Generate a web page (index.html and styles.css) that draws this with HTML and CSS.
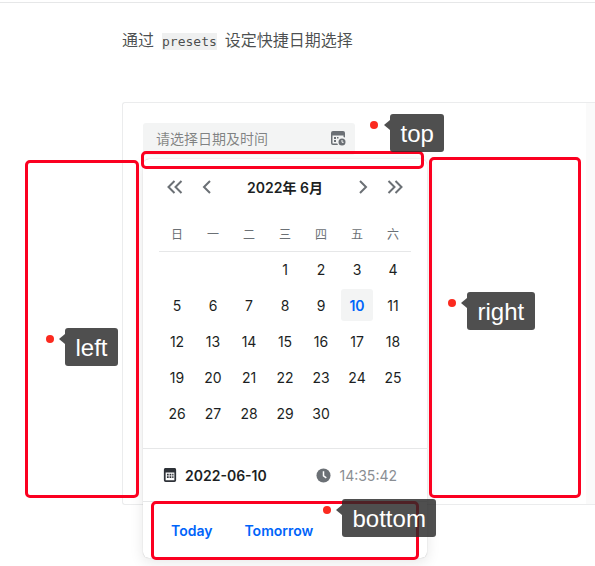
FILE: index.html
```html
<!DOCTYPE html>
<html lang="zh-CN">
<head>
<meta charset="utf-8">
<title>presets</title>
<link rel="stylesheet" href="styles.css">
</head>
<body>
<main class="page">
  <p class="intro">通过 <code class="code">presets</code> 设定快捷日期选择</p>
  <section class="demo">
    <div class="demo-body">
      <div class="picker">
        <div class="input">
          <span class="placeholder">请选择日期及时间</span>
          <svg class="input-icon" viewBox="0 0 16 16" width="16" height="16"><path fill="#6b7075" fill-rule="evenodd" d="M3 1h10a2 2 0 0 1 2 2v4.600a4 4 0 0 0-1.500-.5V5.500h-11V13a.5.5 0 0 0 .5.5h4.200c.2.600.5 1.100.9 1.500H3a2 2 0 0 1-2-2V3a2 2 0 0 1 2-2zM4 7h2v2H4zm0 3h2v2H4zm3-3h1.500v1.500H7z"/><circle cx="12" cy="12" r="3.500" fill="#6b7075"/><path d="M12 10v2.300h1.600" fill="none" stroke="#f4f5f5" stroke-width="1"/></svg>
        </div>
        <div class="panel">
          <div class="cal-head">
            <svg class="nav nav-dbl" viewBox="0 0 16 16" width="16" height="16"><path d="M7.500 2 1.500 8l6 6M14.500 2 8.500 8l6 6" fill="none" stroke="#6b7075" stroke-width="2"/></svg>
            <svg class="nav" viewBox="0 0 16 16" width="16" height="16"><path d="M11 2 5 8l6 6" fill="none" stroke="#6b7075" stroke-width="2"/></svg>
            <strong class="month">2022年 6月</strong>
            <svg class="nav" viewBox="0 0 16 16" width="16" height="16"><path d="M5 2l6 6-6 6" fill="none" stroke="#6b7075" stroke-width="2"/></svg>
            <svg class="nav nav-dbl" viewBox="0 0 16 16" width="16" height="16"><path d="M1.500 2l6 6-6 6M8.500 2l6 6-6 6" fill="none" stroke="#6b7075" stroke-width="2"/></svg>
          </div>
          <div class="weeks"><span>日</span><span>一</span><span>二</span><span>三</span><span>四</span><span>五</span><span>六</span></div>
          <div class="days">
            <span></span><span></span><span></span><span>1</span><span>2</span><span>3</span><span>4</span>
            <span>5</span><span>6</span><span>7</span><span>8</span><span>9</span><span class="today">10</span><span>11</span>
            <span>12</span><span>13</span><span>14</span><span>15</span><span>16</span><span>17</span><span>18</span>
            <span>19</span><span>20</span><span>21</span><span>22</span><span>23</span><span>24</span><span>25</span>
            <span>26</span><span>27</span><span>28</span><span>29</span><span>30</span><span></span><span></span>
          </div>
          <div class="datetime">
            <div class="dt-date">
              <svg viewBox="0 0 16 16" width="14" height="14"><path fill="#2e3238" fill-rule="evenodd" d="M2.500 0h11A2 2 0 0 1 15 2v12a2 2 0 0 1-2 2H3a2 2 0 0 1-2-2V2A2 2 0 0 1 2.500 0zM3 5v9h10V5zM4.500 6.500h2v2h-2zm3 0h2v2h-2zm3 0h1.500v2h-1.500zm-6 3h2v2h-2zm3 0h2v2h-2zm3 0h1.500v2h-1.500z"/></svg>
              <strong>2022-06-10</strong>
            </div>
            <div class="dt-time">
              <svg viewBox="0 0 16 16" width="15" height="15"><circle cx="8" cy="8" r="7.500" fill="#6b7075"/><path d="M8 3.500V8.500l3 2" fill="none" stroke="#fff" stroke-width="1.600"/></svg>
              <span>14:35:42</span>
            </div>
          </div>
          <div class="presets"><span>Today</span><span>Tomorrow</span></div>
        </div>
      </div>
    </div>
    <div class="demo-side"></div>
  </section>
</main>

<div class="frame frame-left"></div>
<div class="frame frame-top"></div>
<div class="frame frame-right"></div>
<div class="frame frame-bottom"></div>

<div class="note note-left"><i class="dot"></i><b class="tip">left</b></div>
<div class="note note-top"><i class="dot"></i><b class="tip">top</b></div>
<div class="note note-right"><i class="dot"></i><b class="tip">right</b></div>
<div class="note note-bottom"><i class="dot"></i><b class="tip">bottom</b></div>
</body>
</html>
```

FILE: styles.css
```css
* { box-sizing: border-box; }
html, body { margin: 0; height: 566px; overflow: hidden; }
body {
  position: relative;
  background: #fff;
  color: #1c1f23;
  font-family: Inter, "Noto Sans CJK SC", sans-serif;
  font-size: 14px;
}
.page { border-top: 1px solid #e6e7e8; margin-top: 2px; padding: 27px 0 0 122px; }
.intro { margin: 0; height: 20px; line-height: 20px; color: rgba(28,31,35,.8); font-size: 16px; white-space: nowrap; }
.code {
  font-family: "DejaVu Sans Mono", monospace;
  font-size: 13px;
  background: #eff0f0;
  padding: 1px 0;
  margin: 0 3.500px;
}
.demo { margin-top: 52px; height: 403px; display: flex; border: 1px solid #ebeced; border-right: 0; border-radius: 3px 0 0 3px; }
.demo-body { flex: 1; padding: 20px; }
.demo-side { width: 9px; background: #fafafa; }
.picker { position: relative; width: 212px; }
.input {
  height: 32px; border-radius: 3px; background: #f3f4f4;
  display: flex; align-items: center; justify-content: space-between;
  padding: 0 9px 2px 13px;
}
.placeholder { color: rgba(28,31,35,.55); font-size: 14px; }
.input-icon { display: block; }
.panel {
  position: absolute; left: 0; top: 36px; width: 284px; height: 399px;
  background: #fff; border-radius: 6px;
  box-shadow: 0 0 1px rgba(0,0,0,.3), 0 4px 14px rgba(0,0,0,.1);
  display: flex; flex-direction: column;
}
.cal-head { display: flex; align-items: center; height: 56px; flex: none; padding: 0 24px; }
.nav { display: block; flex: none; }
.nav-dbl + .nav { margin-left: 16px; }
.nav + .nav-dbl { margin-left: 16px; }
.month { flex: 1; text-align: center; font-weight: 600; font-size: 14px; }
.weeks, .days { display: grid; grid-template-columns: repeat(7, 36px); margin: 0 16px; flex: none; }
.weeks { height: 37px; align-items: center; text-align: center; color: #6b7075; font-size: 12px; border-bottom: 1px solid #e6e7e8; }
.days { margin-top: -1px; grid-auto-rows: 36px; }
.days span { display: flex; align-items: center; justify-content: center; }
.days .today { width: 32px; height: 32px; margin: 2px; border-radius: 3px; background: #f3f4f4; color: #0064fa; font-weight: 600; }
.datetime { margin-top: 17px; height: 54px; flex: none; border-top: 1px solid #e6e7e8; border-bottom: 1px solid #e6e7e8; display: flex; align-items: center; justify-content: space-between; padding: 0 30px 0 20px; }
.dt-date, .dt-time { display: flex; align-items: center; gap: 8px; }
.dt-date strong { font-weight: 600; }
.dt-time { color: #8a8e93; font-size: 14px; }
.dt-date svg, .dt-time svg { display: block; }
.presets { display: flex; gap: 32px; padding: 19px 28px; color: #0064fa; font-weight: 600; font-size: 14px; line-height: 20px; }

.frame { position: absolute; border: 3px solid #fb0020; border-radius: 5px; }
.frame-left { left: 25px; top: 160px; width: 114px; height: 338px; }
.frame-top { left: 141px; top: 151px; width: 283px; height: 18px; }
.frame-right { left: 429px; top: 157px; width: 152px; height: 341px; }
.frame-bottom { left: 151px; top: 501px; width: 268px; height: 59px; }

.note { position: absolute; }
.note-left { left: 46px; top: 328px; }
.note-top { left: 370px; top: 114px; }
.note-right { left: 448px; top: 292px; }
.note-bottom { left: 323px; top: 499px; }
.dot { position: absolute; left: 0; top: 7px; width: 8px; height: 8px; border-radius: 50%; background: #fb2a1f; }
.tip {
  position: absolute; top: 0; height: 38px; padding: 0 10.500px;
  background: rgba(40,40,40,.82); border-radius: 3px; color: #fff;
  font: 400 24px/40px "Liberation Sans", sans-serif; white-space: nowrap;
}
.tip::before {
  content: ""; position: absolute; left: -6px; top: 6px;
  border: 5px solid transparent; border-left: 0; border-right: 6px solid rgba(40,40,40,.82);
}
.note-left .tip { left: 19px; }
.note-top .tip { left: 20px; }
.note-right .tip { left: 19px; }
.note-bottom .tip { left: 19px; }
```
